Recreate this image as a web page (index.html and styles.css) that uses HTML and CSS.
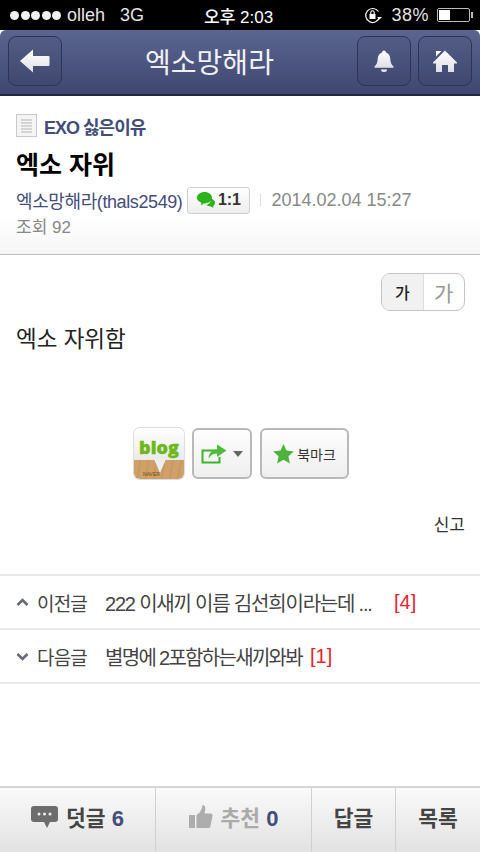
FILE: index.html
```html
<!DOCTYPE html>
<html lang="ko">
<head>
    <meta charset="UTF-8">
    <meta name="viewport" content="width=device-width, initial-scale=1.0">
    <title>엑소망해라</title>
    <link rel="stylesheet" href="styles.css">
</head>
<body>
    <div class="screen">
        <div class="status-bar">
            <div class="status-left">
                <span class="signal"><i></i><i></i><i></i><i></i><i></i></span>
                <span>olleh</span>
                <span class="net">3G</span>
            </div>
            <div class="status-time">오후 2:03</div>
            <div class="status-right">
                <svg class="lock-icon" width="18" height="18" viewBox="0 0 18 18">
                    <path d="M14.500 5.500A7 7 0 1 0 15.600 11" fill="none" stroke="#fff" stroke-width="1.200"/>
                    <path d="M13 11h5l-2.500 2.500z" fill="#fff"/>
                    <rect x="5.500" y="8" width="6" height="5" fill="#fff"/>
                    <path d="M6.800 8V6.500a1.700 1.700 0 0 1 3.400 0V8" fill="none" stroke="#fff" stroke-width="1.100"/>
                </svg>
                <span class="battery-text">38%</span>
                <span class="battery"><span class="battery-fill"></span></span>
            </div>
        </div>

        <div class="nav-bar">
            <button class="nav-btn">
                <svg width="32" height="26" viewBox="0 0 32 26">
                    <defs>
                        <linearGradient id="iconFill" x1="0" y1="0" x2="0" y2="1">
                            <stop offset="0" stop-color="#ffffff"/>
                            <stop offset="1" stop-color="#dfe0e6"/>
                        </linearGradient>
                    </defs>
                    <path d="M1 13 14 1.500V8h15.500a1 1 0 0 1 1 1v8a1 1 0 0 1-1 1H14v6.500z" fill="url(#iconFill)"/>
                </svg>
            </button>
            <h1 class="nav-title">엑소망해라</h1>
            <button class="nav-btn nav-btn-right">
                <svg width="22" height="24" viewBox="0 0 22 24">
                    <path d="M11 1.500c1.200 0 1.800.8 1.900 1.900 3 .9 4.300 3.500 4.400 6.600.1 3.300 1 5.500 3.200 7.500v1.200H1.500v-1.200c2.200-2 3.100-4.200 3.200-7.500.1-3.100 1.400-5.700 4.400-6.600.1-1.100.7-1.900 1.900-1.900z" fill="url(#iconFill)"/>
                    <path d="M8 20.500h6a3 2.500 0 0 1-6 0z" fill="#eef0f4"/>
                </svg>
            </button>
            <button class="nav-btn">
                <svg width="24" height="22" viewBox="0 0 24 22">
                    <path d="M12 .5 24 12.500v1h-3V22h-6v-7H9v7H3v-8.500H0v-1z" fill="url(#iconFill)"/>
                    <path d="M3 1h5.500L3 6.500z" fill="#fff"/>
                </svg>
            </button>
        </div>

        <div class="post-head">
            <div class="board">
                <svg width="21" height="23" viewBox="0 0 21 23">
                    <rect x=".5" y=".5" width="20" height="22" fill="#f4f4f4" stroke="#c9c9c9"/>
                    <path d="M5 6h11M5 9h11M5 12h11M5 15h11M5 18h11" stroke="#b5b5b5" stroke-width="1"/>
                </svg>
                <span>EXO 싫은이유</span>
            </div>
            <h2 class="post-title">엑소 자위</h2>
            <div class="meta">
                <span class="author">엑소망해라(thals2549)</span>
                <span class="chat-btn">
                    <svg width="18" height="16" viewBox="0 0 18 16">
                        <path d="M14 6.500c2.400.7 4 2.300 4 4.200 0 1.300-.7 2.400-1.800 3.200.1.700.4 1.300.8 1.900-1.300-.2-2.400-.7-3.200-1.300-2-.1-3.500-.6-4.500-1.500 2.500-.3 4.800-3 4.700-6.500z" fill="#2eb21c"/>
                        <path d="M7.500 0c4.100 0 7.500 2.500 7.500 5.700s-3.400 5.700-7.500 5.700h-.7c-.9.800-2 1.300-3.300 1.500.5-.7.800-1.400.9-2.200C1.800 9.700 0 7.900 0 5.700 0 2.500 3.400 0 7.500 0z" fill="#2eb21c"/>
                    </svg>
                    1:1
                </span>
                <span class="meta-sep"></span>
                <span class="date">2014.02.04 15:27</span>
            </div>
            <div class="views">조회 92</div>
        </div>

        <div class="post-body">
            <div class="font-size">
                <span class="font-small">가</span>
                <span class="font-large">가</span>
            </div>
            <p class="post-text">엑소 자위함</p>
            <div class="actions">
                <div class="blog-btn">
                    <span class="blog-word">blog</span>
                    <span class="blog-tail"></span>
                    <span class="blog-naver">NAVER</span>
                </div>
                <button class="action-btn share-btn">
                    <svg width="26" height="20" viewBox="0 0 26 20">
                        <path d="M15 6.500H1.500v12h17V13" fill="none" stroke="#3ab52a" stroke-width="2"/>
                        <path d="M16 .5 25.500 6.500 16 13V9.500c-3.500 0-6 1.300-8.500 5 .5-5.500 3.500-8.800 8.500-9.200z" fill="#4fbb3c"/>
                    </svg>
                    <span class="caret"></span>
                </button>
                <button class="action-btn bookmark-btn">
                    <svg width="21" height="20" viewBox="0 0 21 20">
                        <path d="M10.500 0l3 6.600 7.300.8-5.400 4.900 1.500 7.200-6.400-3.700-6.400 3.700 1.500-7.200L.2 7.400l7.300-.8z" fill="#4db33d"/>
                    </svg>
                    북마크
                </button>
            </div>
            <div class="report">신고</div>
        </div>

        <ul class="adjacent">
            <li class="adjacent-row">
                <svg class="chevron" width="13" height="9" viewBox="0 0 13 9"><path d="M1.500 7 6.500 2l5 5" fill="none" stroke="#666a75" stroke-width="2.600"/></svg>
                <span class="adjacent-label">이전글</span>
                <span class="adjacent-title adjacent-long">222 이새끼 이름 김선희이라는데 ...</span>
                <span class="count">[4]</span>
            </li>
            <li class="adjacent-row">
                <svg class="chevron" width="13" height="9" viewBox="0 0 13 9"><path d="M1.500 2l5 5 5-5" fill="none" stroke="#666a75" stroke-width="2.600"/></svg>
                <span class="adjacent-label">다음글</span>
                <span class="adjacent-title adjacent-short">별명에 2포함하는새끼와봐</span>
                <span class="count">[1]</span>
            </li>
        </ul>

        <div class="spacer"></div>

        <div class="toolbar">
            <div class="tool tool-comment">
                <svg width="27" height="22" viewBox="0 0 27 22">
                    <path d="M3 0h21a3 3 0 0 1 3 3v10a3 3 0 0 1-3 3h-5l-3 6-3-6H3a3 3 0 0 1-3-3V3a3 3 0 0 1 3-3z" fill="#6d6d6d"/>
                    <circle cx="8" cy="8" r="1.500" fill="#eee"/><circle cx="13.500" cy="8" r="1.500" fill="#eee"/><circle cx="19" cy="8" r="1.500" fill="#eee"/>
                </svg>
                <span>덧글 <b>6</b></span>
            </div>
            <div class="tool tool-like">
                <svg width="24" height="23" viewBox="0 0 24 23">
                    <rect x="0" y="10" width="6" height="13" fill="#adadad"/>
                    <path d="M7.500 10c3-1.500 5-4.500 6-10 3 0 3.500 3 2 8.500h6a2 2 0 0 1 2 2.500l-2 10a2 2 0 0 1-2 2h-12z" fill="#adadad"/>
                </svg>
                <span>추천 <b>0</b></span>
            </div>
            <div class="tool tool-reply">답글</div>
            <div class="tool tool-list">목록</div>
        </div>
    </div>
</body>
</html>
```

FILE: styles.css
```css
* {
    margin: 0;
    padding: 0;
    box-sizing: border-box;
}

body {
    font-family: "Liberation Sans", "Noto Sans CJK KR", sans-serif;
    background: white;
}

button {
    font-family: inherit;
}

.screen {
    width: 480px;
    height: 852px;
    display: flex;
    flex-direction: column;
    overflow: hidden;
}

.status-bar {
    height: 30px;
    background: black;
    color: #e4e4e4;
    display: flex;
    align-items: center;
    justify-content: space-between;
    padding: 0 10px 0 10px;
    font-size: 18px;
    position: relative;
}

.status-left {
    display: flex;
    align-items: center;
    gap: 6px;
}

.signal {
    display: flex;
    gap: 1.500px;
}

.signal i {
    width: 9px;
    height: 9px;
    border-radius: 50%;
    background: #f0f0f0;
}

.net {
    margin-left: 9px;
}

.status-time {
    position: absolute;
    left: 204px;
    top: 3px;
    font-size: 17px;
    color: white;
    font-weight: 500;
}

.status-right {
    display: flex;
    align-items: center;
    gap: 8px;
}

.lock-icon {
    margin-right: 1px;
}

.battery-text {
    letter-spacing: 0.5px;
}

.battery {
    width: 33px;
    height: 14px;
    border: 1px solid #bbb;
    border-radius: 2px;
    padding: 1px;
    display: block;
    position: relative;
}

.battery::after {
    content: "";
    position: absolute;
    right: -4px;
    top: 3px;
    width: 2px;
    height: 6px;
    background: #bbb;
}

.battery-fill {
    display: block;
    width: 11px;
    height: 10px;
    background: white;
}

.nav-bar {
    height: 66px;
    background: linear-gradient(#5a6590, #3f4770);
    border-radius: 6px 6px 0 0;
    border-bottom: 2px solid #23263c;
    display: flex;
    align-items: center;
    gap: 7px;
    padding: 0 8px 2px;
}

.nav-btn {
    width: 54px;
    height: 50px;
    background: linear-gradient(#525c85, #404870);
    border: 1px solid #2e3454;
    border-radius: 8px;
    display: flex;
    align-items: center;
    justify-content: center;
    flex-shrink: 0;
}

.nav-title {
    flex: 1;
    padding-right: 61px;
    text-align: center;
    color: #f0f1f5;
    font-size: 28px;
    font-weight: normal;
}

.nav-btn-right {
    margin-left: -61px;
}

.post-head {
    height: 159px;
    padding: 18px 16px 0;
    background: linear-gradient(white 75%, #f6f6f6);
    border-bottom: 1px solid #bdbdbd;
}

.board {
    display: flex;
    align-items: center;
    gap: 7px;
    height: 23px;
    color: #434d7a;
    font-size: 18px;
    font-weight: bold;
    letter-spacing: -1px;
}

.post-title {
    font-size: 25px;
    font-weight: bold;
    color: black;
    margin-top: 13px;
    line-height: 30px;
}

.meta {
    display: flex;
    align-items: center;
    margin-top: 6px;
    height: 28px;
    font-size: 18px;
}

.author {
    color: #434d7a;
    letter-spacing: -0.4px;
}

.chat-btn {
    margin-left: 5px;
    width: 63px;
    height: 27px;
    border: 1px solid #cfcfcf;
    border-radius: 3px;
    background: linear-gradient(white, #eee);
    display: flex;
    align-items: center;
    justify-content: center;
    gap: 3px;
    font-size: 16px;
    font-weight: bold;
    color: #333;
}

.meta-sep {
    width: 1px;
    height: 12px;
    background: #ddd;
    margin: 0 10px;
}

.date {
    color: #888;
}

.views {
    color: #888;
    font-size: 17px;
    margin-top: -1px;
}

.post-body {
    height: 320px;
    padding: 18px 15px 0 16px;
}

.font-size {
    width: 84px;
    height: 38px;
    margin-left: auto;
    border: 1px solid #c4c4c4;
    border-radius: 9px;
    display: flex;
    overflow: hidden;
}

.font-small {
    flex: 1;
    background: #f1f1f1;
    border-right: 1px solid #ddd;
    color: #222;
    font-size: 16px;
    font-weight: 500;
    display: flex;
    align-items: center;
    justify-content: center;
}

.font-large {
    flex: 1;
    color: #999;
    font-size: 21px;
    display: flex;
    align-items: center;
    justify-content: center;
}

.post-text {
    margin-top: 14px;
    font-size: 22.500px;
    line-height: 30px;
    color: #222;
}

.actions {
    display: flex;
    align-items: center;
    gap: 8px;
    margin-top: 73px;
    margin-left: 118px;
}

.blog-btn {
    width: 50px;
    height: 51px;
    border-radius: 6px;
    background:
        linear-gradient(white, #eaeaea 62%, transparent 62%),
        repeating-linear-gradient(100deg, #cfa067 0 3px, #c89a60 3px 5px, #cda26a 5px 8px);
    box-shadow: 0 0 0 1px #ddd;
    position: relative;
    text-align: center;
}

.blog-word {
    display: block;
    font-family: "Open Sans", sans-serif;
    font-size: 18px;
    font-weight: 800;
    color: #6cb81a;
    line-height: 26px;
    margin-top: 6px;
    -webkit-text-stroke: 0.4px #6cb81a;
}

.blog-tail {
    position: absolute;
    left: 20px;
    top: 31px;
    border-left: 6px solid transparent;
    border-right: 6px solid transparent;
    border-top: 14px solid #eee;
}

.blog-naver {
    position: absolute;
    left: 9px;
    bottom: 2px;
    font-size: 5px;
    color: #6d4a1f;
}

.action-btn {
    height: 51px;
    border: 2px solid #b9b9b9;
    border-radius: 6px;
    background: linear-gradient(#fdfdfd, #efefef);
    display: flex;
    align-items: center;
    justify-content: center;
}

.share-btn {
    width: 60px;
    gap: 6px;
}

.caret {
    border-left: 5.500px solid transparent;
    border-right: 5.500px solid transparent;
    border-top: 6px solid #666;
}

.bookmark-btn {
    width: 89px;
    gap: 3px;
    font-size: 14px;
    color: #333;
}

.report {
    margin-top: 32px;
    text-align: right;
    font-size: 17px;
    color: #333;
}

.adjacent {
    list-style: none;
    margin-top: -1px;
    border-top: 2px solid #e8e8e8;
}

.adjacent-row {
    height: 54px;
    border-bottom: 2px solid #e8e8e8;
    display: flex;
    align-items: center;
    padding-left: 16px;
    font-size: 19px;
    color: #444;
}

.chevron {
    margin-right: 8px;
}

.adjacent-label {
    width: 68px;
    letter-spacing: -0.8px;
}

.adjacent-title {
    font-size: 20px;
    letter-spacing: -1.200px;
    margin-right: 8px;
}

.adjacent-long {
    width: 289px;
    margin-right: 0;
}

.adjacent-short {
    letter-spacing: -1.700px;
}

.count {
    color: #e8232b;
    font-size: 20px;
}

.spacer {
    flex: 1;
}

.toolbar {
    height: 66px;
    display: flex;
    border-top: 2px solid #d4d4d4;
    background: linear-gradient(#fafafa, #e2e2e2);
    font-size: 21.500px;
    font-weight: bold;
    color: #444;
}

.tool {
    display: flex;
    align-items: center;
    justify-content: center;
    gap: 7px;
    padding-bottom: 7px;
    border-right: 1px solid #d0d0d0;
}

.tool b {
    color: #434d7a;
    font-size: 22px;
}

.tool-comment {
    width: 156px;
    gap: 8px;
}

.tool-like {
    width: 156px;
    gap: 8px;
    color: #aaa;
}

.tool-reply {
    width: 84px;
}

.tool-list {
    width: 84px;
    border-right: none;
}
```
